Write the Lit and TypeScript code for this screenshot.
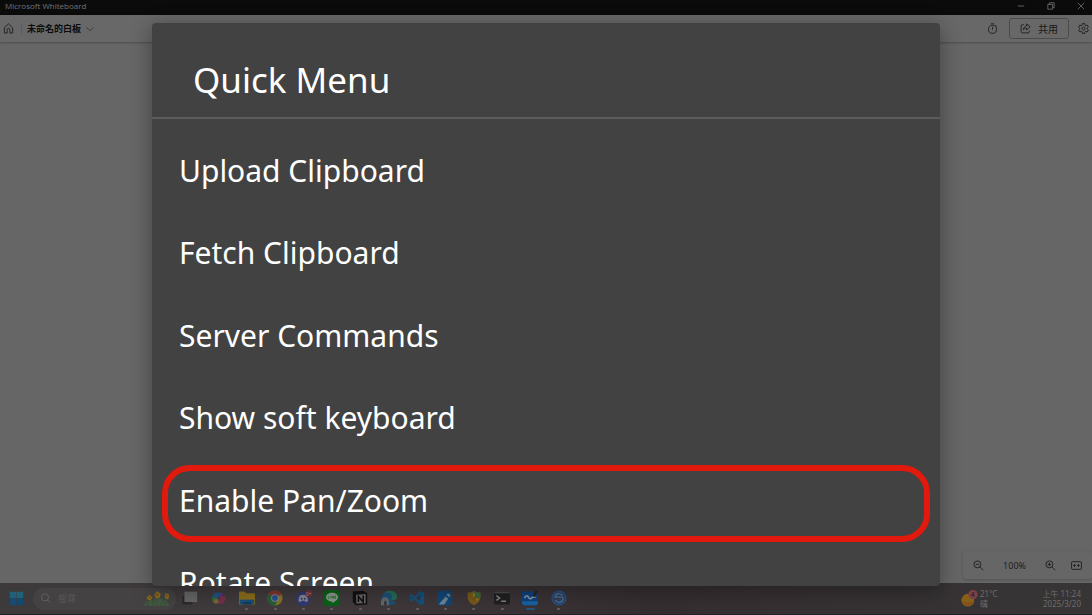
import { LitElement, html, css, svg } from "lit";
import { customElement } from "lit/decorators.js";

const icon = (body: unknown, box = 20) =>
  html`<svg class="icon" viewBox="0 0 ${box} ${box}" aria-hidden="true">${body}</svg>`;

const home = svg`<path d="M2.500 8.600 10 1.500l7.500 7.100v9.600h-5v-6a2.500 2.500 0 0 0-5 0v6h-5z"/>`;
const chevron = svg`<path d="m1 6 9 8 9-8"/>`;
const timer = svg`<circle cx="10" cy="11.500" r="7.300"/><path d="M7 1.500h6M10 7v5M15.800 4l2 2"/>`;
const share = svg`<path d="M7 3H4.500A2.500 2.500 0 0 0 2 5.500v10A2.500 2.500 0 0 0 4.500 18h10a2.500 2.500 0 0 0 2.500-2.500V14"/><path d="M12 1.500 18.500 7 12 12.500v-3c-3 0-4.500 1-6 3 .3-4 2.500-6.500 6-7z"/>`;
const gear = svg`<path d="m8 1-.6 2.800-1.600.9-2.700-.8-2 3.400L3.200 9.200v1.600l-2.100 1.900 2 3.400 2.700-.8 1.600.9L8 19h4l.6-2.800 1.600-.9 2.700.8 2-3.400-2.100-1.900V9.200l2.100-1.900-2-3.400-2.700.8-1.600-.9L12 1z"/><circle cx="10" cy="10" r="2.800"/>`;
const zoomOut = svg`<circle cx="8" cy="8" r="6.300"/><path d="m12.500 12.500 6 6M5 8h6"/>`;
const zoomIn = svg`<circle cx="8" cy="8" r="6.300"/><path d="m12.500 12.500 6 6M5 8h6M8 5v6"/>`;
const fit = svg`<rect x="1" y="3" width="18" height="14" rx="2"/><path d="M4 10h4.500M11.500 10H16M6.500 7.500v5M13.500 7.500v5"/>`;
const search = svg`<circle cx="9" cy="8" r="6.500"/><path d="m13.500 12.500 5 5.500"/>`;

const flowers = svg`
  <path d="M1 17q2-7 9-6 4-5 10-1 6-1 8 7z" fill="#46564b"/>
  <path d="M4 17 8 8M10 17l5-11M15 17V6M18 17l7-10M7 17l-3-5M21 17l5-5M12 17l-2-6" stroke="#37552d" stroke-width="1.200" fill="none"/>
  <path d="m4 8 3-3 3 3-2 3-3-1zM12 5l3-4 4 3-1 4-4 1zM23 7l1-4 4 2-1 5-3-1z" fill="#846c22"/>
  <circle cx="15" cy="5" r="1.600" fill="#82500f"/><circle cx="25" cy="6" r="1.200" fill="#82500f"/><circle cx="7" cy="8" r="1.200" fill="#82500f"/>`;

const apps: { name: string; open: boolean; active?: boolean; art: unknown }[] = [
  { name: "Task view", open: false, art: svg`<path d="M0 8h13v10H0z" fill="#2c2b2b"/><path d="M3 2h16v13H3z" fill="#656565"/>` },
  { name: "Copilot", open: false, art: svg`<path d="M5 3h7l1 5-4 1-2 4H1l1-6z" fill="#23527e"/><path d="M1 9h5l3 4-2 3H3q-2-1-2-7z" fill="#28644a"/><path d="m3 12 5-1 2 4-2 2H4z" fill="#80652e"/><path d="m11 3 3 1 2 4-5 1z" fill="#4a3880"/><path d="m12 7 6 1 1 3-4 6-6 1 1-6z" fill="#74304f"/>` },
  { name: "File Explorer", open: true, art: svg`<path d="M0 3q0-1 1-1h6l2 2h10q1 0 1 1v13H0z" fill="#8a6d1c"/><path d="M1 12h18v6H1z" fill="#194f76"/><path d="M5 15h10v3H5z" fill="#0f3c61"/>` },
  { name: "Chrome", open: true, art: svg`<circle cx="10" cy="10" r="9.500" fill="#85702a"/><path d="M10 10 1.800 5.200a9.500 9.500 0 0 1 16.400 0z" fill="#81332c"/><path d="M10 10 1.800 5.200A9.500 9.500 0 0 0 10 19.500l4-7.500z" fill="#245f36"/><circle cx="10" cy="10" r="4.800" fill="#8c8c8c"/><circle cx="10" cy="10" r="3.700" fill="#254f8d"/>` },
  { name: "Discord", open: true, art: svg`<circle cx="9" cy="11" r="9" fill="#313974"/><path d="M5 7q4-2 8 0 2 3 2 7l-3 1-1-1.500H7L6 15l-3-1q0-4 2-7z" fill="#85858f"/><circle cx="7" cy="11" r="1.200" fill="#313974"/><circle cx="11" cy="11" r="1.200" fill="#313974"/><circle cx="16" cy="4.500" r="4.500" fill="#70313b"/><text x="12.500" y="7" font-size="6" fill="#a8828a">9+</text>` },
  { name: "LINE", open: true, art: svg`<rect width="20" height="20" rx="3" fill="#086217"/><path d="M10 3.500c4.500 0 7.500 2.500 7.500 5.500 0 3-3.500 5-7 7.500v-2C6 14 2.500 12 2.500 9S5.500 3.500 10 3.500z" fill="#8b958c"/><path d="M5.500 7.500v3h1.500M8.500 7.500v3M10 10.500v-3l2 3v-3M15 7.500h-1.500v3H15M13.500 9H15" stroke="#086217" fill="none" stroke-width=".7"/>` },
  { name: "Notion", open: true, art: svg`<path d="m1 2 13-1 5 3v14L5 19l-4-4z" fill="#111"/><path d="m5 6 12-1v11.500L5.500 17z" fill="#686565"/><path d="M8 15V8l6 7V7" stroke="#111" stroke-width="2" fill="none"/>` },
  { name: "Edge", open: true, art: svg`<path d="M3 5Q6 0 12 1c5 0 8 3 8 7 0 4-3 5-7 5z" fill="#256b58"/><path d="M1 11C1 3 8 2 12 5c3 2 2 5 1 6 0 3 3 5 6 3-2 5-9 7-13 3z" fill="#1a4f7a"/><path d="M0 19v-4q0-6 5-6t5 6v4z" fill="#5e676d"/><path d="M4 19v-4q1-3 3 0v4" fill="#2b3440"/>` },
  { name: "Visual Studio Code", open: true, art: svg`<path d="m14 1 5 2v14l-5 2-7-7-4 3-2-1V6l2-1 4 3z" fill="#18507a"/><path d="M14 6v8l-5-4zM3 8l2 2-2 2z" fill="#3a3336"/>` },
  { name: "Photos", open: true, art: svg`<rect x="1" y="1" width="18" height="18" rx="1" fill="#124675"/><path d="m3 17 8-9 3 3-5 7H3z" fill="#6d8290"/><path d="m12 6 2-2 3 3-2 2z" fill="#6d8290"/>` },
  { name: "Security", open: true, art: svg`<path d="M10 1q4 3 8 2v7q-1 6-8 9-7-3-8-9V3q4 1 8-2z" fill="#74591c"/><path d="M10 1q4 3 8 2v7h-8z" fill="#3b6438"/><path d="M10 4v8h5" stroke="#a27921" stroke-width="2" fill="none"/><circle cx="10" cy="11" r="3" fill="#765117"/>` },
  { name: "Terminal", open: true, art: svg`<rect x="0" y="2" width="20" height="16" rx="1.500" fill="#202020"/><path d="M0 4q0-2 2-2h16q2 0 2 2z" fill="#4b4b4b"/><path d="m3 7 4 3-4 3M9 14h6" fill="none" stroke="#818181" stroke-width="1.800"/>` },
  { name: "Whiteboard", open: true, active: true, art: svg`<path d="M0 2h20v15l-2 2H2l-2-2z" fill="#10417c"/><path d="M0 14h20v3l-2 2H2l-2-2z" fill="#1762a0"/><path d="M3 10q3-5 5-1t5 0h4" stroke="#8294a8" stroke-width="2" fill="none"/><path d="m13 7 4-7 3 2-4 7z" fill="#27242c"/>` },
  { name: "Spacedesk", open: true, art: svg`<circle cx="10" cy="10" r="8.500" fill="#363c50" stroke="#254f86" stroke-width="2"/><path d="M14.500 7.500A5 5 0 0 0 5 9h8q3 0 2 2a5 5 0 0 1-9.500 1.500" stroke="#41709f" stroke-width="1.600" fill="none"/>` },
];

@customElement("quick-menu")
export class QuickMenu extends LitElement {
  static styles = css`
    :host {
      display: flex;
      flex-direction: column;
      overflow: hidden;
      box-sizing: border-box;
      border-radius: 4px;
      background: #424242;
      color: #fff;
      font-family: "Noto Sans", sans-serif;
      box-shadow: 0 4px 20px 2px rgba(0, 0, 0, 0.3);
    }
    .title {
      flex: none;
      box-sizing: border-box;
      height: 96px;
      margin: 0;
      padding: 30px 41px 0;
      border-bottom: 2px solid #5c5c5c;
      font-size: 35px;
      line-height: 54px;
      font-weight: 400;
    }
    .list {
      flex: none;
      display: grid;
      grid-template-rows: repeat(6, 1fr);
      height: 495px;
      margin: 0;
      padding: 10px 0 0;
      list-style: none;
    }
    .item {
      position: relative;
      display: grid;
    }
    .action {
      padding: 0 27px;
      border: 0;
      background: none;
      color: inherit;
      font: inherit;
      font-size: 30px;
      text-align: left;
      white-space: nowrap;
    }
    .marked::after {
      content: "";
      position: absolute;
      inset: 6px 10px 0;
      border: 6px solid #e2190d;
      border-radius: 28px;
      pointer-events: none;
    }
  `;

  private actions = [
    "Upload Clipboard",
    "Fetch Clipboard",
    "Server Commands",
    "Show soft keyboard",
    "Enable Pan/Zoom",
    "Rotate Screen",
  ];

  render() {
    return html`
      <h1 class="title">Quick Menu</h1>
      <ul class="list">
        ${this.actions.map(
          (name) => html`<li class="item ${name === "Enable Pan/Zoom" ? "marked" : ""}">
            <button class="action">${name}</button>
          </li>`
        )}
      </ul>
    `;
  }
}

@customElement("app-root")
export class AppRoot extends LitElement {
  static styles = css`
    :host {
      position: relative;
      display: flex;
      flex-direction: column;
      height: 100vh;
      overflow: hidden;
      background: #666;
      color: #181818;
      font-family: "Noto Sans", "Noto Sans CJK TC", sans-serif;
      font-size: 10px;
    }
    button {
      display: inline-flex;
      align-items: center;
      justify-content: center;
      padding: 0;
      border: 0;
      background: none;
      color: inherit;
      font: inherit;
    }
    .icon {
      display: block;
      width: 11px;
      height: 11px;
      fill: none;
      stroke: currentColor;
      stroke-width: 1.5;
    }
    .titlebar {
      flex: none;
      display: flex;
      justify-content: space-between;
      height: 15px;
      padding: 0 5px;
      background: #0b0b0b;
      color: #737373;
      font-family: "Open Sans", sans-serif;
      font-size: 8px;
      line-height: 11px;
    }
    .window-buttons {
      display: flex;
      gap: 20px;
      align-items: center;
      height: 11px;
      padding-right: 1px;
    }
    .window-buttons .icon {
      width: 10px;
      height: 8px;
    }
    .toolbar {
      flex: none;
      display: flex;
      justify-content: space-between;
      align-items: center;
      height: 27px;
      padding: 0 3px;
      background: #686868;
      box-shadow: 0 1px 2px rgba(0, 0, 0, 0.25);
    }
    .group {
      display: flex;
      align-items: center;
    }
    .divider {
      width: 1px;
      height: 11px;
      margin: 0 5px 0 7px;
      background: #5c5c5c;
    }
    .board {
      gap: 5px;
      font-size: 9px;
      font-weight: 700;
      color: #0c0c0c;
      font-family: "Noto Sans CJK TC", sans-serif;
    }
    .board .icon {
      width: 8px;
      height: 8px;
      color: #333;
      stroke-width: 2;
    }
    .share {
      gap: 7px;
      width: 60px;
      height: 21px;
      margin: 0 9px 0 11px;
      border: 1px solid #4b4b4b;
      border-radius: 3px;
    }
    .canvas {
      flex: 1;
      display: flex;
      align-items: flex-end;
      justify-content: flex-end;
    }
    .zoom {
      display: flex;
      align-items: center;
      gap: 19px;
      height: 28px;
      padding: 0 10px;
      margin-bottom: 4px;
      border-radius: 3px;
      background: #666;
      box-shadow: 0 1px 3px rgba(0, 0, 0, 0.2);
      font-family: "Open Sans", sans-serif;
      font-size: 9px;
    }
    .zoom .fit {
      margin-left: -4px;
    }
    .taskbar {
      flex: none;
      display: flex;
      align-items: center;
      box-sizing: border-box;
      height: 32px;
      padding: 0 11px 0 9px;
      border-bottom: 1px solid #20202e;
      background: linear-gradient(90deg, #3c3a3b, #413a3d 30%, #352e31 60%, #373536);
      color: #6e6c6d;
    }
    .start .icon {
      width: 15px;
      height: 15px;
    }
    .search {
      display: flex;
      align-items: center;
      gap: 7px;
      box-sizing: border-box;
      width: 143px;
      height: 22px;
      margin-left: 9px;
      padding: 0 4px 0 7px;
      border-radius: 11px;
      background: #444243;
      color: #676566;
    }
    .query {
      flex: 1;
      min-width: 0;
      padding: 0;
      border: 0;
      outline: 0;
      background: none;
      font: inherit;
      font-size: 9px;
      color: inherit;
    }
    .query::placeholder {
      color: #5a5859;
      opacity: 1;
    }
    .flowers {
      width: 30px;
      height: 17px;
    }
    .apps {
      display: flex;
      width: 397px;
      height: 24px;
    }
    .app {
      flex: 1;
      flex-direction: column;
      gap: 2px;
      padding-top: 2px;
    }
    .app .icon {
      width: 16px;
      height: 16px;
      stroke: none;
      flex: none;
    }
    .dot {
      flex: none;
      width: 3px;
      height: 2px;
      border-radius: 1px;
    }
    .open {
      background: #656263;
    }
    .active {
      width: 9px;
      background: #25537a;
    }
    .status {
      display: flex;
      flex: 1;
      justify-content: space-between;
      padding-left: 388px;
      font-size: 8px;
      line-height: 10px;
      white-space: nowrap;
    }
    .weather {
      display: flex;
      gap: 2px;
      text-align: left;
      font-size: 8px;
    }
    .weather .icon {
      width: 17px;
      height: 17px;
      stroke: none;
    }
    .clock {
      display: block;
      text-align: right;
    }
    .line {
      display: block;
    }
    quick-menu {
      position: absolute;
      inset: 23px 152px 29px;
    }
  `;

  render() {
    return html`
      <header class="titlebar">
        <span>Microsoft Whiteboard</span>
        <div class="window-buttons">
          <button aria-label="Minimize">${icon(svg`<path stroke-width="2" d="M2 10h16"/>`)}</button>
          <button aria-label="Restore">${icon(svg`<path stroke-width="2" d="M2 6h12v12H2zM6 6V2h12v12h-4"/>`)}</button>
          <button aria-label="Close">${icon(svg`<path stroke-width="2" d="m2 2 16 16M18 2 2 18"/>`)}</button>
        </div>
      </header>
      <nav class="toolbar">
        <div class="group">
          <button aria-label="Home">${icon(home)}</button>
          <span class="divider"></span>
          <button class="board">未命名的白板 ${icon(chevron)}</button>
        </div>
        <div class="group">
          <button aria-label="Timer">${icon(timer)}</button>
          <button class="share">${icon(share)}共用</button>
          <button aria-label="Settings">${icon(gear)}</button>
        </div>
      </nav>
      <main class="canvas">
        <div class="zoom">
          <button aria-label="Zoom out">${icon(zoomOut)}</button>
          <span>100%</span>
          <button aria-label="Zoom in">${icon(zoomIn)}</button>
          <button class="fit" aria-label="Fit to screen">${icon(fit)}</button>
        </div>
      </main>
      <footer class="taskbar">
        <button class="start" aria-label="Start">
          ${icon(svg`<path d="M1 1h8.500v8.500H1z" fill="#216078" stroke="none"/><path d="M10 1h9v8.500h-9z" fill="#1f6276" stroke="none"/><path d="M1 10h8.500v9H1z" fill="#174b73" stroke="none"/><path d="M10 10h9v9h-9z" fill="#124a72" stroke="none"/>`)}
        </button>
        <label class="search">
          ${icon(search)}
          <input class="query" type="search" placeholder="搜尋" aria-label="搜尋" />
          <svg class="flowers" viewBox="0 0 30 18" aria-hidden="true">${flowers}</svg>
        </label>
        <div class="apps">
          ${apps.map(
            (a) => html`<button class="app" aria-label=${a.name}>
              ${icon(a.art)}
              <span class="dot ${a.active ? "active" : a.open ? "open" : ""}"></span>
            </button>`
          )}
        </div>
        <div class="status">
          <button class="weather">
            ${icon(svg`<circle cx="8" cy="12" r="7.500" fill="#876018"/><path d="M1 14a7.500 7.500 0 0 0 14 0z" fill="#85501b"/><circle cx="14" cy="5.500" r="5.500" fill="#7a4148"/><text x="11.500" y="8.500" font-size="8" fill="#211719">4</text>`)}
            <span><span class="line">21°C</span><span class="line">晴</span></span>
          </button>
          <button class="clock">
            <span class="line">上午 11:24</span>
            <span class="line">2025/3/20</span>
          </button>
        </div>
      </footer>
      <quick-menu role="dialog" aria-label="Quick Menu"></quick-menu>
    `;
  }
}
